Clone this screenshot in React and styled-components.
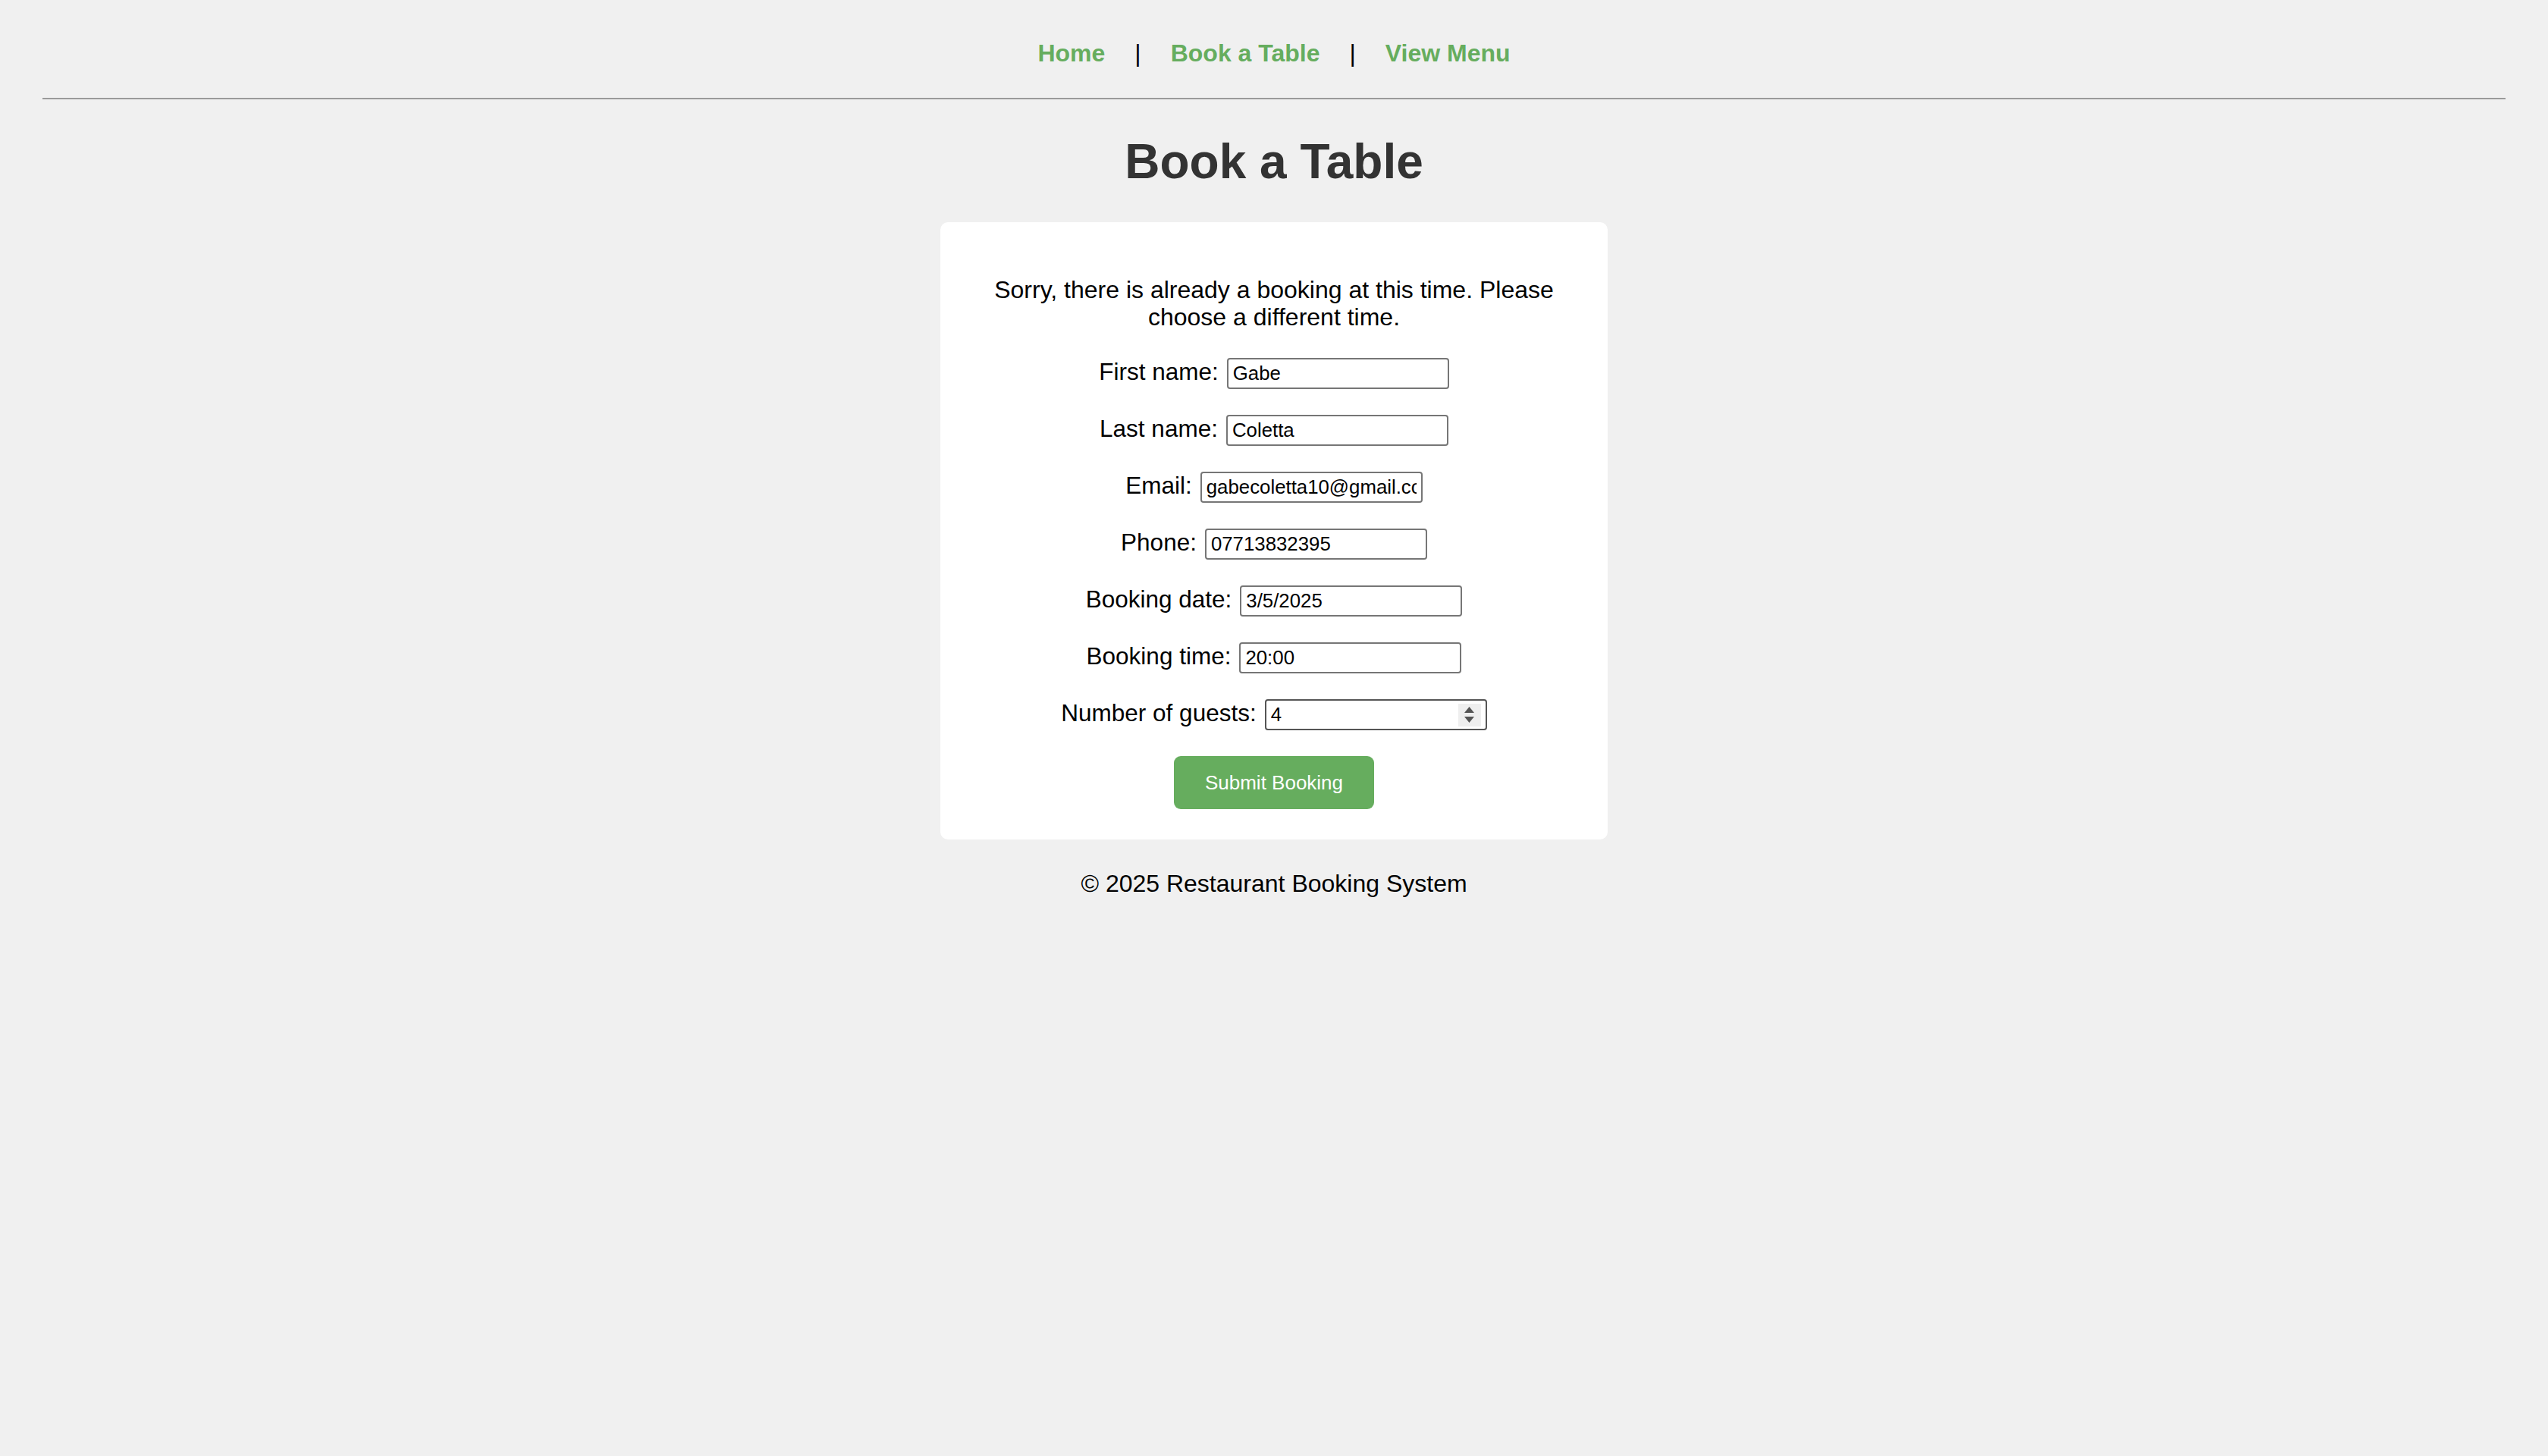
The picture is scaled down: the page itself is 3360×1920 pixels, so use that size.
import React from "react";
import styled, { createGlobalStyle } from "styled-components";

const GlobalStyle = createGlobalStyle`
  html, body {
    margin: 0;
    padding: 0;
    background: #f0f0f0;
  }
  body {
    font-family: "Liberation Sans", Arial, Helvetica, sans-serif;
    color: #000;
  }
`;

const Page = styled.div`
  padding: 0 56px 40px;
`;

const Nav = styled.nav`
  display: flex;
  justify-content: center;
  align-items: center;
  gap: 39px;
  padding: 52px 0 41px;
  font-size: 32px;
  line-height: 36px;
`;

const NavLink = styled.a`
  color: #66ad5e;
  font-weight: bold;
  text-decoration: none;
`;

const Separator = styled.span`
  color: #000;
`;

const Divider = styled.hr`
  margin: 0;
  height: 2px;
  border: none;
  background: #9a9a9a;
`;

const Title = styled.h1`
  margin: 45px 0 0;
  text-align: center;
  font-size: 64px;
  line-height: 74px;
  font-weight: bold;
  color: #333;
`;

const Card = styled.section`
  box-sizing: border-box;
  width: 880px;
  margin: 43px auto 0;
  padding: 40px 42px;
  background: #fff;
  border-radius: 10px;
`;

const Message = styled.p`
  margin: 31px 0 36px;
  text-align: center;
  font-size: 32px;
  line-height: 36px;
`;

const Form = styled.form`
  display: flex;
  flex-direction: column;
  align-items: center;
  gap: 34px;
`;

const Row = styled.div`
  display: flex;
  align-items: baseline;
  gap: 11px;
`;

const Label = styled.label`
  font-size: 31.5px;
  line-height: 36px;
`;

const TextInput = styled.input`
  box-sizing: border-box;
  width: 293px;
  height: 41px;
  padding: 0 6px;
  border: 2px solid #767676;
  border-radius: 4px;
  background: #fff;
  color: #000;
  font-family: inherit;
  font-size: 25.8px;
  outline: none;
`;

const NumberBox = styled.div`
  box-sizing: border-box;
  display: flex;
  align-items: center;
  width: 293px;
  height: 41px;
  padding: 0 6px;
  border: 2px solid ${(p) => p.$border || "#767676"};
  border-radius: 4px;
  background: #fff;
`;

const NumberField = styled.input`
  flex: 1;
  min-width: 0;
  height: 37px;
  padding: 0;
  border: none;
  outline: none;
  background: transparent;
  color: #000;
  font-family: inherit;
  font-size: 25.8px;
`;

const Spinner = styled.div`
  display: flex;
  flex-direction: column;
  align-items: center;
  justify-content: center;
  gap: 5px;
  width: 30px;
  height: 30px;
  background: #efefef;
`;

const SubmitButton = styled.button`
  height: 70px;
  padding: 0 41px;
  border: none;
  border-radius: 9px;
  background: #66ad5e;
  color: #fff;
  font-family: inherit;
  font-size: 26px;
`;

const Footer = styled.footer`
  margin-top: 40px;
  text-align: center;
  font-size: 32px;
  line-height: 36px;
`;

const Triangle = ({ up }) => (
  <svg width="13" height="8" viewBox="0 0 13 8">
    <polygon points={up ? "6.5,0 13,8 0,8" : "0,0 13,0 6.5,8"} fill="#555" />
  </svg>
);

const fields = [
  { id: "first", label: "First name:", value: "Gabe" },
  { id: "last", label: "Last name:", value: "Coletta" },
  { id: "email", label: "Email:", value: "gabecoletta10@gmail.com" },
  { id: "phone", label: "Phone:", value: "07713832395" },
  { id: "date", label: "Booking date:", value: "3/5/2025" },
  { id: "time", label: "Booking time:", value: "20:00" },
];

export default function App() {
  return (
    <>
      <GlobalStyle />
      <Page>
        <Nav>
          <NavLink href="#">Home</NavLink>
          <Separator>|</Separator>
          <NavLink href="#">Book a Table</NavLink>
          <Separator>|</Separator>
          <NavLink href="#">View Menu</NavLink>
        </Nav>
        <Divider />
        <Title>Book a Table</Title>
        <Card>
          <Message>
            Sorry, there is already a booking at this time. Please choose a
            different time.
          </Message>
          <Form onSubmit={(e) => e.preventDefault()}>
            {fields.map((f) => (
              <Row key={f.id}>
                <Label htmlFor={f.id}>{f.label}</Label>
                <TextInput id={f.id} type="text" defaultValue={f.value} />
              </Row>
            ))}
            <Row>
              <Label htmlFor="guests">Number of guests:</Label>
              <NumberBox $border="#555">
                <NumberField id="guests" type="text" defaultValue="4" />
                <Spinner>
                  <Triangle up />
                  <Triangle />
                </Spinner>
              </NumberBox>
            </Row>
            <SubmitButton type="submit">Submit Booking</SubmitButton>
          </Form>
        </Card>
        <Footer>© 2025 Restaurant Booking System</Footer>
      </Page>
    </>
  );
}
